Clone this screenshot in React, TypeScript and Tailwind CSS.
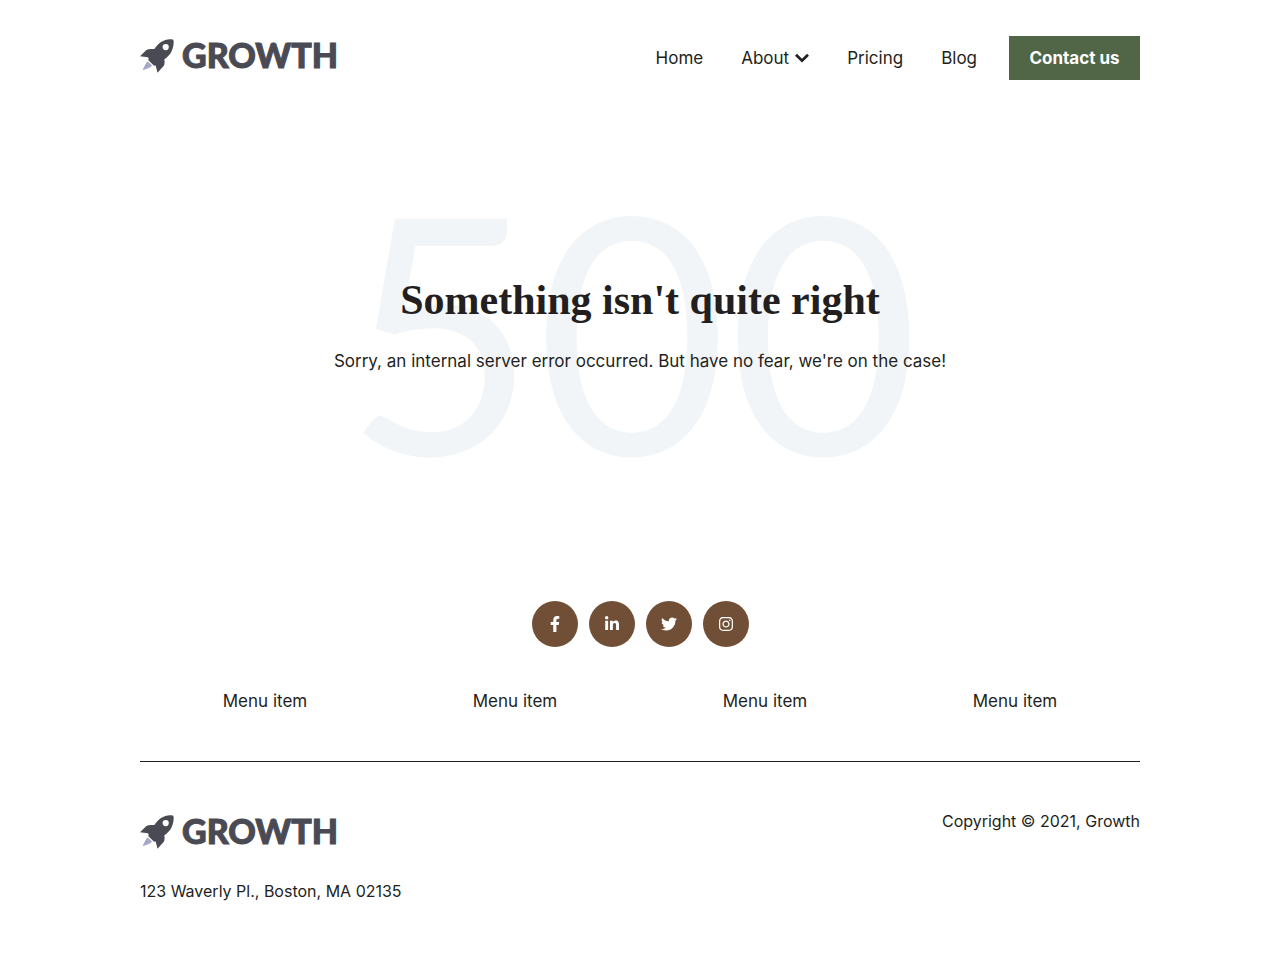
import { FaFacebookF, FaInstagram, FaLinkedinIn, FaTwitter } from "react-icons/fa";

function Logo() {
  return (
    <a href="#" aria-label="Growth" className="flex h-10 w-[200px] items-center gap-2 text-[#4a4a54]">
      <svg viewBox="0 0 34 34" className="h-[34px] w-[34px] shrink-0" aria-hidden="true">
        <path
          fill="#4a4a54"
          fillRule="evenodd"
          d="M32.600.4C28.500-.4 24.500.7 21 3c-2.700 1.800-4.800 4.300-6.600 7-3-.2-5.600-.2-8 .9L0 17.200l7.700 1 1.100 1.100-.6 1.800 5.800 5.600 1.200-.4.7.9L17.500 33.800l6.300-7c1-1.900.9-4.100.5-6.200 3-2.300 5.700-5.100 7.300-8.400C33.300 8.700 34 4.500 33.500 1.400 33.400.8 33.100.5 32.600.4ZM25.700 5a3.100 3.100 0 1 1 0 6.200 3.100 3.100 0 0 1 0-6.200Z"
        />
        <path fill="#a4a9c9" d="M7.400 22.200Q10 24 12.200 26.800L9 28.900 2.500 31.200 5 26Z" />
      </svg>
      <span className="pb-0.5 font-[Lato,sans-serif] text-[34px] leading-9 font-black [-webkit-text-stroke:1px_#4a4a54]">
        GROWTH
      </span>
    </a>
  );
}

const socials = [
  { label: "Facebook", Icon: FaFacebookF },
  { label: "LinkedIn", Icon: FaLinkedinIn },
  { label: "Twitter", Icon: FaTwitter },
  { label: "Instagram", Icon: FaInstagram },
];

const menuItems = ["Menu item", "Menu item", "Menu item", "Menu item"];

export default function App() {
  return (
    <div className="min-h-screen bg-white font-[Inter,sans-serif] text-[17px] leading-7 text-[#231f20]">
      <header className="mx-auto flex max-w-[1000px] items-start justify-between pt-9">
        <Logo />
        <nav className="flex h-11 items-center gap-[38px]" aria-label="Main">
          <a href="#">Home</a>
          <button type="button" className="flex items-center gap-1.5">
            About
            <svg viewBox="0 0 14 10" className="h-2.5 w-3.5" fill="none" stroke="currentColor" strokeWidth="2.700" aria-hidden="true">
              <path d="m1 1.700 6 6 6-6" />
            </svg>
          </button>
          <a href="#">Pricing</a>
          <div className="flex items-center gap-8">
            <a href="#">Blog</a>
            <a href="#" className="flex h-11 w-[131px] items-center justify-center bg-[#516647] font-bold text-white">
              Contact us
            </a>
          </div>
        </nav>
      </header>

      <main className="relative mx-auto mt-[97px] flex h-80 max-w-[1000px] flex-col items-center pt-24 text-center">
        <div
          aria-hidden="true"
          className="absolute inset-0 flex items-center justify-center pr-4 pb-5 font-[Lato,sans-serif] text-[330px] leading-none font-normal text-[#f1f5f8]"
        >
          500
        </div>
        <h1 className="relative font-['Liberation_Serif',serif] text-[42px] leading-[54px] font-bold">
          Something isn't quite right
        </h1>
        <p className="relative mt-5">Sorry, an internal server error occurred. But have no fear, we're on the case!</p>
      </main>

      <footer className="mx-auto max-w-[1000px] pt-[104px] pb-16">
        <div className="flex justify-center gap-[11px]">
          {socials.map(({ label, Icon }) => (
            <a
              key={label}
              href="#"
              aria-label={label}
              className="flex size-[46px] items-center justify-center rounded-full bg-[#714e36] text-white"
            >
              <Icon size={16} />
            </a>
          ))}
        </div>
        <nav className="mt-10 grid grid-cols-4 text-center" aria-label="Footer">
          {menuItems.map((item, i) => (
            <a key={i} href="#">
              {item}
            </a>
          ))}
        </nav>
        <div className="mt-[46px] flex justify-between border-t border-[#231f20] pt-[45px] text-base leading-7">
          <div>
            <div className="pt-[5px]">
              <Logo />
            </div>
            <p className="mt-[25px]">123 Waverly Pl., Boston, MA 02135</p>
          </div>
          <p>Copyright © 2021, Growth</p>
        </div>
      </footer>
    </div>
  );
}
